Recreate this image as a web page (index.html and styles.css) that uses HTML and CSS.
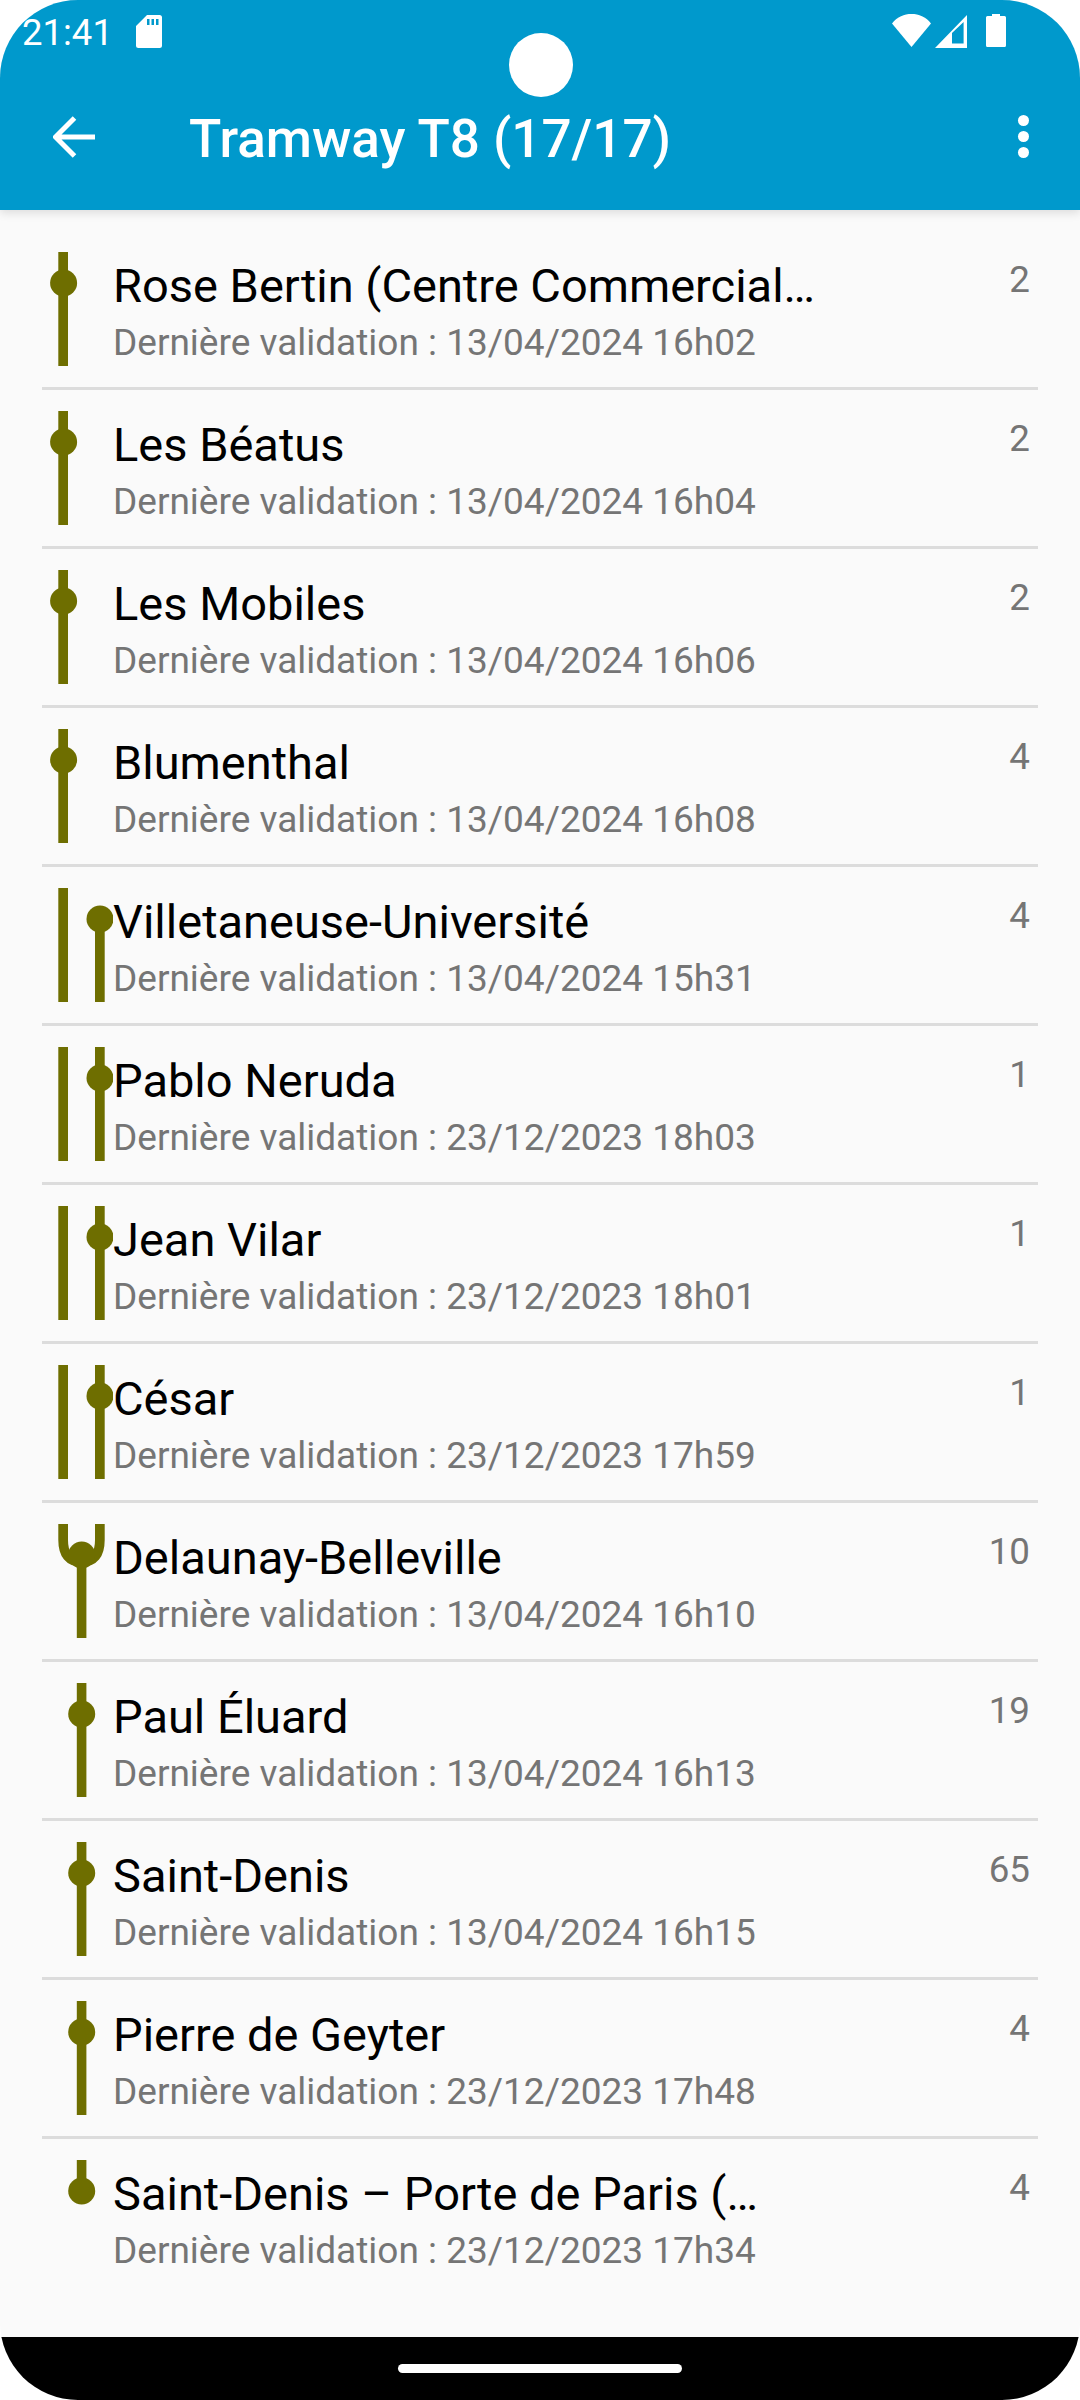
FILE: index.html
```html
<!DOCTYPE html>
<html lang="fr">
<head>
  <meta charset="utf-8" />
  <title>Tramway T8 (17/17)</title>
  <link rel="stylesheet" href="styles.css">
</head>
<body>
  <svg class="defs" width="0" height="0">
    <symbol id="line-single" viewBox="0 0 71 114">
      <rect x="16.300" y="0" width="9.700" height="114" />
      <circle cx="21.600" cy="31" r="13.500" />
    </symbol>
    <symbol id="line-start" viewBox="0 0 71 114">
      <rect x="16.300" y="0" width="9.700" height="114" />
      <rect x="53" y="31" width="9.700" height="83" />
      <circle cx="58" cy="31" r="13.500" />
    </symbol>
    <symbol id="line-double" viewBox="0 0 71 114">
      <rect x="16.300" y="0" width="9.700" height="114" />
      <rect x="53" y="0" width="9.700" height="114" />
      <circle cx="58" cy="31" r="13.500" />
    </symbol>
    <symbol id="line-fork" viewBox="0 0 71 114">
      <path class="fork" d="M21.150 0V16Q21.150 38 39.600 38Q57.850 38 57.850 16V0" />
      <rect x="34.800" y="31" width="9.600" height="83" />
      <circle cx="39.700" cy="31" r="13.500" />
    </symbol>
    <symbol id="line-center" viewBox="0 0 71 114">
      <rect x="34.800" y="0" width="9.600" height="114" />
      <circle cx="39.700" cy="31" r="13.500" />
    </symbol>
    <symbol id="line-end" viewBox="0 0 71 114">
      <rect x="34.800" y="0" width="9.600" height="31" />
      <circle cx="39.700" cy="31" r="13.500" />
    </symbol>
  </svg>

  <div class="screen">
    <header class="appbar">
      <div class="statusbar">
        <span class="clock">21:41</span>
        <svg class="sd-icon" viewBox="0 0 26 33">
          <path fill-rule="evenodd" d="M11 0H23.500Q26 0 26 2.500V30.500Q26 33 23.500 33H2.500Q0 33 0 30.500V11ZM11 4V10H13.500V4ZM15.500 4V10H18V4ZM20 4V10H22.500V4Z" />
        </svg>
        <div class="status-right">
          <svg class="wifi-icon" viewBox="0 0 39 33">
            <path d="M19.500 0C27 0 33.500 2.500 39 9.500L19.500 33L0 9.500C5.500 2.500 12 0 19.500 0Z" />
          </svg>
          <svg class="signal-icon" viewBox="0 0 32 33">
            <path fill-rule="evenodd" d="M32 0V33H0ZM28.600 7L17 18V28.500H28.600Z" />
          </svg>
          <svg class="battery-icon" viewBox="0 0 20 33">
            <path d="M6 0H14V2H18.500Q20 2 20 3.500V31.500Q20 33 18.500 33H1.500Q0 33 0 31.500V3.500Q0 2 1.500 2H6Z" />
          </svg>
        </div>
      </div>
      <div class="toolbar">
        <svg class="back-icon" viewBox="0 0 42 42">
          <path d="M42 21H3M21.500 2L2.500 21L21.500 40" />
        </svg>
        <h1 class="toolbar-title">Tramway T8 (17/17)</h1>
        <div class="menu-dots"><i></i><i></i><i></i></div>
      </div>
    </header>

    <div class="camera"></div>

    <main class="stops">
      <div class="stop">
        <svg class="stop-line"><use href="#line-single" /></svg>
        <div class="stop-text">
          <div class="stop-name">Rose Bertin (Centre Commercial…</div>
          <div class="stop-date">Dernière validation : 13/04/2024 16h02</div>
        </div>
        <div class="stop-count">2</div>
      </div>
      <div class="stop">
        <svg class="stop-line"><use href="#line-single" /></svg>
        <div class="stop-text">
          <div class="stop-name">Les Béatus</div>
          <div class="stop-date">Dernière validation : 13/04/2024 16h04</div>
        </div>
        <div class="stop-count">2</div>
      </div>
      <div class="stop">
        <svg class="stop-line"><use href="#line-single" /></svg>
        <div class="stop-text">
          <div class="stop-name">Les Mobiles</div>
          <div class="stop-date">Dernière validation : 13/04/2024 16h06</div>
        </div>
        <div class="stop-count">2</div>
      </div>
      <div class="stop">
        <svg class="stop-line"><use href="#line-single" /></svg>
        <div class="stop-text">
          <div class="stop-name">Blumenthal</div>
          <div class="stop-date">Dernière validation : 13/04/2024 16h08</div>
        </div>
        <div class="stop-count">4</div>
      </div>
      <div class="stop">
        <svg class="stop-line"><use href="#line-start" /></svg>
        <div class="stop-text">
          <div class="stop-name">Villetaneuse-Université</div>
          <div class="stop-date">Dernière validation : 13/04/2024 15h31</div>
        </div>
        <div class="stop-count">4</div>
      </div>
      <div class="stop">
        <svg class="stop-line"><use href="#line-double" /></svg>
        <div class="stop-text">
          <div class="stop-name">Pablo Neruda</div>
          <div class="stop-date">Dernière validation : 23/12/2023 18h03</div>
        </div>
        <div class="stop-count">1</div>
      </div>
      <div class="stop">
        <svg class="stop-line"><use href="#line-double" /></svg>
        <div class="stop-text">
          <div class="stop-name">Jean Vilar</div>
          <div class="stop-date">Dernière validation : 23/12/2023 18h01</div>
        </div>
        <div class="stop-count">1</div>
      </div>
      <div class="stop">
        <svg class="stop-line"><use href="#line-double" /></svg>
        <div class="stop-text">
          <div class="stop-name">César</div>
          <div class="stop-date">Dernière validation : 23/12/2023 17h59</div>
        </div>
        <div class="stop-count">1</div>
      </div>
      <div class="stop">
        <svg class="stop-line"><use href="#line-fork" /></svg>
        <div class="stop-text">
          <div class="stop-name">Delaunay-Belleville</div>
          <div class="stop-date">Dernière validation : 13/04/2024 16h10</div>
        </div>
        <div class="stop-count">10</div>
      </div>
      <div class="stop">
        <svg class="stop-line"><use href="#line-center" /></svg>
        <div class="stop-text">
          <div class="stop-name">Paul Éluard</div>
          <div class="stop-date">Dernière validation : 13/04/2024 16h13</div>
        </div>
        <div class="stop-count">19</div>
      </div>
      <div class="stop">
        <svg class="stop-line"><use href="#line-center" /></svg>
        <div class="stop-text">
          <div class="stop-name">Saint-Denis</div>
          <div class="stop-date">Dernière validation : 13/04/2024 16h15</div>
        </div>
        <div class="stop-count">65</div>
      </div>
      <div class="stop">
        <svg class="stop-line"><use href="#line-center" /></svg>
        <div class="stop-text">
          <div class="stop-name">Pierre de Geyter</div>
          <div class="stop-date">Dernière validation : 23/12/2023 17h48</div>
        </div>
        <div class="stop-count">4</div>
      </div>
      <div class="stop">
        <svg class="stop-line"><use href="#line-end" /></svg>
        <div class="stop-text">
          <div class="stop-name">Saint-Denis – Porte de Paris (…</div>
          <div class="stop-date">Dernière validation : 23/12/2023 17h34</div>
        </div>
        <div class="stop-count">4</div>
      </div>
    </main>

    <footer class="navbar"><div class="home-pill"></div></footer>
  </div>
</body>
</html>
```

FILE: styles.css
```css
body {
  margin: 0;
  background: #fff;
  font-family: Roboto, sans-serif;
}
.defs {
  position: absolute;
}
.screen {
  position: relative;
  display: flex;
  flex-direction: column;
  width: 1080px;
  height: 2400px;
  overflow: hidden;
  border-radius: 78px;
  background: #fafafa;
}

/* barre du haut */
.appbar {
  position: relative;
  z-index: 1;
  height: 210px;
  background: #0099cc;
  color: #fff;
  box-shadow: 0 3px 9px rgba(0,0,0,0.12);
}
.statusbar {
  display: flex;
  align-items: flex-start;
  height: 63px;
  padding: 14px 74px 0 22px;
  box-sizing: border-box;
}
.clock {
  font-size: 36.5px;
  line-height: 38px;
  margin-right: 23px;
}
.statusbar svg {
  display: block;
  fill: #fff;
}
.sd-icon {
  width: 26px;
  height: 33px;
  margin-top: 1px;
}
.status-right {
  display: flex;
  gap: 4px;
  margin-left: auto;
}
.wifi-icon {
  width: 39px;
  height: 33px;
}
.signal-icon {
  width: 32px;
  height: 33px;
  margin-top: 1px;
}
.battery-icon {
  width: 20px;
  height: 33px;
  margin-left: 15px;
}
.toolbar {
  display: flex;
  align-items: center;
  height: 147px;
  padding: 0 51px 0 53px;
  box-sizing: border-box;
}
.back-icon {
  width: 42px;
  height: 42px;
  margin-right: 94px;
  fill: none;
  stroke: #fff;
  stroke-width: 5;
}
.toolbar-title {
  flex: 1;
  margin: 0;
  font-size: 53px;
  font-weight: 500;
  line-height: 64px;
  padding-top: 5px;
}
.menu-dots {
  display: flex;
  flex-direction: column;
  gap: 5px;
}
.menu-dots i {
  display: block;
  width: 11px;
  height: 11px;
  border-radius: 50%;
  background: #fff;
}
.camera {
  position: absolute;
  top: 33px;
  left: 509px;
  z-index: 2;
  width: 64px;
  height: 64px;
  border-radius: 50%;
  background: #fff;
}

/* liste des arrets */
.stops {
  flex: 1;
  padding: 21px 42px 0;
}
.stop {
  display: flex;
  align-items: flex-start;
  height: 114px;
  padding: 21px 8px 21px 0;
  border-bottom: 3px solid #dcdcdc;
}
.stop:last-child {
  border-bottom: none;
}
.stop-line {
  flex: none;
  width: 71px;
  height: 114px;
  fill: #6e6e00;
}
.fork {
  fill: none;
  stroke: #6e6e00;
  stroke-width: 9.700;
}
.stop-text {
  flex: 1;
  padding-top: 6px;
}
.stop-name {
  font-size: 47px;
  line-height: 56px;
  color: #000;
  white-space: nowrap;
}
.stop-date {
  margin-top: 7px;
  font-size: 37px;
  line-height: 44px;
  color: #757575;
  white-space: nowrap;
}
.stop-count {
  padding-top: 6px;
  font-size: 36.75px;
  line-height: 44px;
  color: #757575;
}

.navbar {
  display: flex;
  align-items: center;
  justify-content: center;
  height: 63px;
  background: #000;
}
.home-pill {
  width: 284px;
  height: 9px;
  border-radius: 5px;
  background: #fff;
}
```
